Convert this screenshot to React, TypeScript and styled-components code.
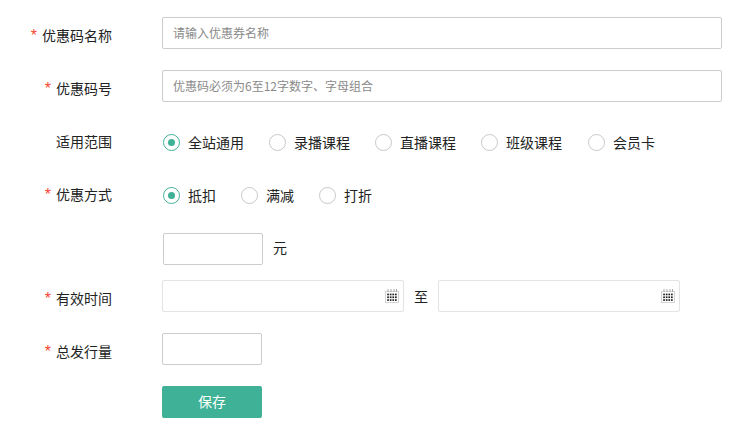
import React from "react";
import styled, { createGlobalStyle } from "styled-components";

const Global = createGlobalStyle`
  html, body { margin: 0; padding: 0; background: #fff; }
  body { font-family: "Noto Sans CJK SC", "Liberation Sans", sans-serif; font-size: 14px; color: #222; }
  * { box-sizing: border-box; }
`;

const Form = styled.form`
  display: flex;
  flex-direction: column;
  padding: 17px 0 0 0;
  width: 733px;
  height: 440px;
`;

const Row = styled.div<{ $mb?: number }>`
  display: flex;
  align-items: center;
  height: 32px;
  margin-bottom: ${(p) => p.$mb ?? 21}px;
`;

const Label = styled.label`
  flex: 0 0 112px;
  width: 112px;
  margin-right: 50px;
  text-align: right;
  line-height: 20px;
  padding-top: 4px;
  white-space: nowrap;
  color: #222;
`;

const Star = styled.span`
  color: #f4492f;
  margin-right: 5px;
  font-size: 16px;
  font-family: "Liberation Sans", sans-serif;
`;

const TextInput = styled.input<{ $w?: number; $ml?: number }>`
  display: block;
  width: ${(p) => p.$w ?? 560}px;
  margin-left: ${(p) => p.$ml ?? 0}px;
  height: 32px;
  border: 1px solid #ccc;
  border-radius: 2px;
  padding: 0 10px 2px;
  font: inherit;
  font-size: 12px;
  outline: none;
  &::placeholder { color: #8a8a8a; opacity: 1; }
`;

const RadioGroup = styled.div`
  display: flex;
  align-items: center;
  padding-top: 6px;
`;

const RadioItem = styled.span<{ $w: number }>`
  display: flex;
  align-items: center;
  width: ${(p) => p.$w}px;
  padding-left: 1px;
  line-height: 20px;
`;

const RadioMark = styled.span<{ $on?: boolean }>`
  flex: none;
  width: 17px;
  height: 17px;
  margin-right: 8px;
  border-radius: 50%;
  border: 1.5px solid ${(p) => (p.$on ? "#3eb196" : "#c8c8c8")};
  display: flex;
  align-items: center;
  justify-content: center;
  &::after {
    content: "";
    display: ${(p) => (p.$on ? "block" : "none")};
    width: 7px;
    height: 7px;
    border-radius: 50%;
    background: #3eb196;
  }
`;

const Unit = styled.span`
  margin-left: 10px;
  line-height: 20px;
  padding-bottom: 4px;
`;

const DateField = styled.div`
  position: relative;
  width: 242px;
  height: 32px;
`;

const DateInput = styled.input`
  display: block;
  width: 100%;
  height: 32px;
  border: 1px solid #e4e4e4;
  border-radius: 2px;
  outline: none;
`;

const DateIcon = styled.svg`
  position: absolute;
  right: 5px;
  top: 9px;
  width: 14px;
  height: 14px;
`;

const To = styled.span`
  width: 34px;
  text-align: center;
  line-height: 20px;
`;

const SaveButton = styled.button`
  width: 100px;
  height: 32px;
  margin-left: 162px;
  padding: 0 0 2px;
  border: none;
  border-radius: 2px;
  background: #3eb196;
  color: #fff;
  font: inherit;
  font-size: 14px;
`;

function Calendar() {
  const dots = [];
  for (let r = 0; r < 3; r++) for (let c = 0; c < 4; c++)
    dots.push(<rect key={`${r}-${c}`} x={2.2 + c * 2.6} y={4.6 + r * 2.8} width="1.7" height="1.7" fill="#222" />);
  return (
    <DateIcon viewBox="0 0 14 14">
      <rect x="0.5" y="2.5" width="13" height="11" fill="#fff" stroke="#d4d4d4" />
      <path d="M3 0v3M6 0v3M9 0v3M11.5 0v3" stroke="#aaa" />
      {dots}
    </DateIcon>
  );
}

const Radios = ({ items }: { items: [string, number, boolean?][] }) => (
  <RadioGroup>
    {items.map(([t, w, on]) => (
      <RadioItem key={t} $w={w}>
        <RadioMark $on={on} />
        {t}
      </RadioItem>
    ))}
  </RadioGroup>
);

export default function App() {
  return (
    <>
      <Global />
      <Form>
        <Row>
          <Label><Star>*</Star>优惠码名称</Label>
          <TextInput placeholder="请输入优惠券名称" />
        </Row>
        <Row>
          <Label><Star>*</Star>优惠码号</Label>
          <TextInput placeholder="优惠码必须为6至12字数字、字母组合" />
        </Row>
        <Row>
          <Label>适用范围</Label>
          <Radios items={[["全站通用", 106, true], ["录播课程", 106], ["直播课程", 106], ["班级课程", 107], ["会员卡", 106]]} />
        </Row>
        <Row $mb={25}>
          <Label><Star>*</Star>优惠方式</Label>
          <Radios items={[["抵扣", 78, true], ["满减", 78], ["打折", 78]]} />
        </Row>
        <Row $mb={15}>
          <Label />
          <TextInput $w={100} $ml={1} />
          <Unit>元</Unit>
        </Row>
        <Row>
          <Label><Star>*</Star>有效时间</Label>
          <DateField><DateInput /><Calendar /></DateField>
          <To>至</To>
          <DateField><DateInput /><Calendar /></DateField>
        </Row>
        <Row>
          <Label><Star>*</Star>总发行量</Label>
          <TextInput $w={100} />
        </Row>
        <SaveButton type="button">保存</SaveButton>
      </Form>
    </>
  );
}
